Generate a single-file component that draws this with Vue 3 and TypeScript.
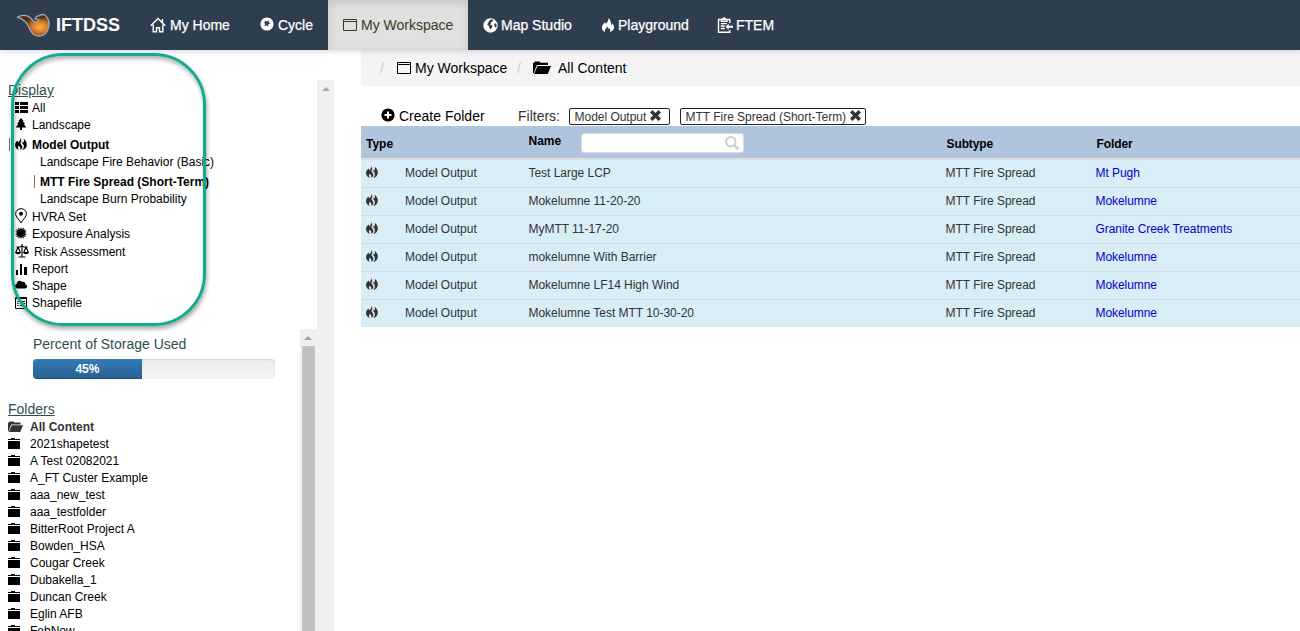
<script setup lang="ts">
interface NavItem { label: string; icon: string; width: number; active?: boolean }
interface DisplayItem { label: string; icon?: string; kind?: string }
interface ContentRow { name: string; folder: string }

const navItems: NavItem[] = [
  { label: 'My Home', icon: 'home', width: 109 },
  { label: 'Cycle', icon: 'cycle', width: 83 },
  { label: 'My Workspace', icon: 'window', width: 140, active: true },
  { label: 'Map Studio', icon: 'globe', width: 119 },
  { label: 'Playground', icon: 'fire', width: 116 },
  { label: 'FTEM', icon: 'clipboard', width: 87 },
]

const displayItems: DisplayItem[] = [
  { label: 'All', icon: 'list' },
  { label: 'Landscape', icon: 'tree' },
  { label: 'Model Output', icon: 'flames', kind: 'selected' },
  { label: 'Landscape Fire Behavior (Basic)', kind: 'child' },
  { label: 'MTT Fire Spread (Short-Term)', kind: 'child selected' },
  { label: 'Landscape Burn Probability', kind: 'child' },
  { label: 'HVRA Set', icon: 'pin', kind: 'spaced' },
  { label: 'Exposure Analysis', icon: 'burst' },
  { label: 'Risk Assessment', icon: 'scale', kind: 'spaced wide' },
  { label: 'Report', icon: 'chart' },
  { label: 'Shape', icon: 'cloud' },
  { label: 'Shapefile', icon: 'sheet' },
]

const folders: string[] = [
  '2021shapetest', 'A Test 02082021', 'A_FT Custer Example', 'aaa_new_test',
  'aaa_testfolder', 'BitterRoot Project A', 'Bowden_HSA', 'Cougar Creek',
  'Dubakella_1', 'Duncan Creek', 'Eglin AFB', 'FebNow',
]

const filters: string[] = ['Model Output', 'MTT Fire Spread (Short-Term)']

const rows: ContentRow[] = [
  { name: 'Test Large LCP', folder: 'Mt Pugh' },
  { name: 'Mokelumne 11-20-20', folder: 'Mokelumne' },
  { name: 'MyMTT 11-17-20', folder: 'Granite Creek Treatments' },
  { name: 'mokelumne With Barrier', folder: 'Mokelumne' },
  { name: 'Mokelumne LF14 High Wind', folder: 'Mokelumne' },
  { name: 'Mokelumne Test MTT 10-30-20', folder: 'Mokelumne' },
]

const storageUsed = 45
</script>

<template>
  <div class="page">
    <svg class="sprite" width="0" height="0">
      <symbol id="home" viewBox="0 0 16 16">
        <path d="M.7 8.800 8 1.500l7.300 7.300M3.200 7.500v7.200h3.300v-4h3v4h3.300V7.500M12.500 5.500V2" fill="none" stroke="currentColor" stroke-width="1.400" />
      </symbol>
      <symbol id="cycle" viewBox="0 0 16 16">
        <path fill-rule="evenodd" fill="currentColor" d="M8 .5a7.500 7.500 0 1 0 0 15A7.500 7.500 0 0 0 8 .5zM5 4l3 1 2.500-1.300-.6 2.300 2.300 1.400-2.600.6-.3 2.800-1.800-1.500-2.700 1.200 1.200-2.900L4 6.300l2-.3z" />
      </symbol>
      <symbol id="window" viewBox="0 0 14 14">
        <path d="M.5 1.500h13v11H.5zM.5 3.500h13" fill="none" stroke="currentColor" stroke-width="1" />
      </symbol>
      <symbol id="globe" viewBox="0 0 16 16">
        <path fill-rule="evenodd" fill="currentColor" d="M8 .3a7.700 7.700 0 1 0 0 15.400A7.700 7.700 0 0 0 8 .3zM9 1.300l2 .9-.8 1.300-1.700.9.1 1.400-1.600.8 1.800.6 1.500 1.200-.8 1.800-1.600 2-1.200-2.100-.7-2-1.500-1.300L5.500 5l1.200-2zM12 6.500l1.500-1 1 2-.2 2.600-1.800-.6z" />
      </symbol>
      <symbol id="fire" viewBox="0 0 16 16">
        <path fill-rule="evenodd" fill="currentColor" d="M8.300 0c.7 3.200-1 4.700-2.900 6.500L4.600 4.800C2.500 6.700 1 8.500 1 11c0 2.300 1.400 4 3.700 5-.9-2.700 1-4.200 3-6.200-.1 1.500.4 2.200 1.300 2.700l.7-1.100c1 1.500 1.100 3 .5 4.600 3-1 4.800-2.900 4.800-5.400 0-1.800-.8-3.300-2.300-4.700 0 1.100-.3 1.700-1 2.200C11.500 4.700 11 2 8.300 0z" />
      </symbol>
      <symbol id="clipboard" viewBox="0 0 16 16">
        <path d="M12.800 6V2.500H1.500v12.700h11.300V13M4.500 2.400h1.200C5.700.4 8.500.4 8.500 2.400H10v2H4.500zM3.800 6.600h6M3.800 9h4M3.800 11.500h4" fill="none" stroke="currentColor" stroke-width="1.400" />
        <path d="m8.500 9.700 3.200-3v2H16v2h-4.300v2z" fill="currentColor" />
      </symbol>
      <symbol id="list" viewBox="0 0 13 12">
        <path d="M0 1h4v3H0zM5 1h8v3H5zM0 5h4v3H0zM5 5h8v3H5zM0 9h4v3H0zM5 9h8v3H5z" fill="currentColor" />
      </symbol>
      <symbol id="tree" viewBox="0 0 12 12">
        <path d="m6 0 2.700 3H7.700l2.300 3H8.800L11.300 9.500H7V12H5V9.500H.7L3.200 6H2l2.300-3h-1z" fill="currentColor" />
      </symbol>
      <symbol id="flames" viewBox="0 0 12 12">
        <path d="M4.800 0c1.300 2.400-.4 3.200-1.600 4.300L2.600 2.600C.7 4.200-.1 5.800.1 7.700c.2 1.900 1.600 3.400 3.600 4-1-1.700-.8-3.100.3-4.300.1 1 .5 1.400 1.200 1.800.4 1 .2 1.700-.3 2.600C7.200 10.900 7.800 9.500 7.100 8 6.600 6.600 5.300 6 5.600 4.300 6.800 3 6.600 1.300 4.800 0z" fill="currentColor" />
        <path d="M8.600.8c3 2.200 3.600 5 3 7.400-.6 2-2.100 3.200-4.400 3.700 1.500-1.500 1.900-3 1.500-4.600C8.400 6 6.900 5.300 7 3.800l1.100 1c.9-1 1.100-2.400.5-4z" fill="currentColor" />
      </symbol>
      <symbol id="pin" viewBox="0 0 12 16">
        <path d="M6 .7C2.700.7.600 2.900.600 5.800c0 3.100 3 4.700 5.400 9.200 2.400-4.500 5.400-6.100 5.400-9.200C11.400 2.900 9.300.7 6 .7z" fill="none" stroke="currentColor" />
        <circle cx="6" cy="5.700" r="2" fill="currentColor" />
      </symbol>
      <symbol id="burst" viewBox="0 0 12 12">
        <path d="m6 0 .8 2.300L8.900.4l-.3 2.600 2.700-.8-1.600 2 2.300.6L9.600 6l2.400 1.400-2.400.5 1.600 2-2.700-.6.3 2.400-2-1.700L6 12l-.8-2-2 1.700.3-2.400-2.700.6 1.600-2L0 7.400 2.400 6 0 4.800l2.300-.6-1.600-2 2.700.8L3.100.4l2.100 1.900z" fill="currentColor" />
      </symbol>
      <symbol id="scale" viewBox="0 0 14 14">
        <path d="M7 0v12.500M3.500 13h7M1.500 3H5l2-1 2 1h3.500M3 3 .8 8.500M3 3l2.300 5.500M11 3 8.800 8.500M11 3l2.300 5.500" fill="none" stroke="currentColor" stroke-width="1.100" />
        <path d="M0 8h6c-.5 3-5.500 3-6 0zM8 8h6c-.5 3-5.500 3-6 0z" fill="currentColor" />
      </symbol>
      <symbol id="chart" viewBox="0 0 12 12">
        <path d="M1 7h2v5H1zM5 1h2v11H5zM9 4h3v8H9z" fill="currentColor" />
      </symbol>
      <symbol id="cloud" viewBox="0 0 12 12">
        <path d="M2.500 9.500C-.6 9.300-.7 5.700 1.700 5.100 1.700 1.700 5.500.8 7 3.100c2-.8 3.600.4 3.300 2.200 2.300.5 2.200 4.200-.3 4.200z" fill="currentColor" />
      </symbol>
      <symbol id="sheet" viewBox="0 0 12 12">
        <path d="M.5.5h11v11H.5zM.5 1.500h11M2.200 4.500h1.300M5 4.500h5M2.200 6.500h1.300M5 6.500h5M2.200 8.500h1.300M5 8.500h5" fill="none" stroke="currentColor" />
      </symbol>
      <symbol id="folder" viewBox="0 0 12 12">
        <path d="M0 1h3V0h4v1h5v1H0zM0 3h12v8H0z" fill="currentColor" />
      </symbol>
      <symbol id="folder-open" viewBox="0 0 18 14">
        <path d="M0 12V1.700h1L2 .5h4.500l1 1.200h7.500v2.300H3.800L.8 12zM4.500 5H18l-3.200 8H1z" fill="currentColor" />
      </symbol>
      <symbol id="plus" viewBox="0 0 14 14">
        <circle cx="7" cy="7" r="6.600" fill="currentColor" />
        <path d="M7 3.500v7M3.500 7h7" stroke="#fff" stroke-width="2" />
      </symbol>
      <symbol id="cross" viewBox="0 0 11 11">
        <path d="M2.500 0 5.500 3 8.500 0 11 2.500 8 5.500 11 8.500 8.500 11 5.500 8 2.500 11 0 8.500l3-3L0 2.500z" fill="currentColor" />
      </symbol>
      <symbol id="search" viewBox="0 0 14 14">
        <circle cx="5.800" cy="5.800" r="4.700" fill="none" stroke="currentColor" stroke-width="2" />
        <path d="m9.300 9.300 4 4" stroke="currentColor" stroke-width="2.500" />
      </symbol>
    </svg>

    <header class="topbar">
      <div class="brand">
        <svg class="logo" viewBox="0 0 34 24">
          <defs>
            <radialGradient id="ember" cx="0.72" cy="0.58" r="0.5">
              <stop offset="0" stop-color="#ffae50" />
              <stop offset="0.5" stop-color="#d67a24" />
              <stop offset="1" stop-color="#4f3215" />
            </radialGradient>
          </defs>
          <path d="M1.300 4.200C5 1.800 10.500 1.800 14 4.600c2.200 1.800 3 4.100 5 4.400 1.800.2 3-.6 3.100-1.800 0-1.100-1.600-1.300-2.900-.9.3-2.200 1.800-3.600 4-3.500 1.200-1.700 4.800-1.900 6.700.3 2.600 2.700 3.600 6.500 2.900 10.400-1.100 6-5 9.500-10.100 9.500-4.500-.1-7.500-3-9.300-7.500C11.600 10.200 9 6.500 1.300 4.200z" fill="url(#ember)" stroke="#a5abb3" stroke-width="1.300" stroke-linejoin="round" />
          <path d="M21 4.900c1.700-1 3.100.3 4.300-.3 1.200-.7 2.500-.3 3.200.5" fill="none" stroke="#3c3126" stroke-width="1.300" />
        </svg>
        <span>IFTDSS</span>
      </div>
      <nav>
        <a v-for="item in navItems" :key="item.label" :class="['nav-item', item.icon, { active: item.active }]" :style="{ width: item.width + 'px' }">
          <svg><use :href="'#' + item.icon" /></svg><span>{{ item.label }}</span>
        </a>
      </nav>
    </header>

    <div class="body">
      <aside class="sidebar">
        <div class="outer">
          <section class="display">
            <h4>Display</h4>
            <div v-for="item in displayItems" :key="item.label" :class="['entry', item.kind]">
              <svg v-if="item.icon" :class="item.icon"><use :href="'#' + item.icon" /></svg>
              <span>{{ item.label }}</span>
            </div>
          </section>
          <section class="lower">
            <div class="lower-content">
              <p class="storage-label">Percent of Storage Used</p>
              <div class="progress"><div class="bar" :style="{ width: storageUsed + '%' }">{{ storageUsed }}%</div></div>
              <h4>Folders</h4>
              <div class="folder current"><svg><use href="#folder-open" /></svg><span>All Content</span></div>
              <div v-for="name in folders" :key="name" class="folder"><svg><use href="#folder" /></svg><span>{{ name }}</span></div>
            </div>
            <div class="track inner"><i></i><b></b></div>
          </section>
        </div>
        <div class="track"><i></i></div>
      </aside>

      <main>
        <div class="breadcrumb">
          <span class="slash">/</span>
          <svg class="bc-window"><use href="#window" /></svg><span class="bc-work">My Workspace</span>
          <span class="slash">/</span>
          <svg class="bc-folder"><use href="#folder-open" /></svg><span>All Content</span>
        </div>
        <div class="toolbar">
          <svg class="plus"><use href="#plus" /></svg><span class="create">Create Folder</span>
          <span class="filters">Filters:</span>
          <span v-for="f in filters" :key="f" class="chip"><span>{{ f }}</span><svg><use href="#cross" /></svg></span>
        </div>
        <div class="table">
          <div class="row head">
            <span class="type">Type</span>
            <span></span>
            <span class="name">Name<label class="search"><svg><use href="#search" /></svg></label></span>
            <span class="title">Subtype</span>
            <span class="title">Folder</span>
          </div>
          <div v-for="row in rows" :key="row.name" class="row">
            <span class="type"><svg><use href="#flames" /></svg></span>
            <span>Model Output</span>
            <span>{{ row.name }}</span>
            <span>MTT Fire Spread</span>
            <a>{{ row.folder }}</a>
          </div>
        </div>
      </main>
    </div>
    <div class="highlight"></div>
  </div>
</template>

<style>
body { overflow: hidden; }
</style>

<style scoped>
* { box-sizing: border-box; }
.page { position: relative; width: 1300px; height: 631px; overflow: hidden; background: #fff; color: #000; font: 12px/17px "Liberation Sans", Arial, sans-serif; display: flex; flex-direction: column; }
.sprite { position: absolute; }
svg { flex: none; display: block; }
.topbar { height: 50px; flex: none; display: flex; background: #2f3e4e; color: #fff; box-shadow: 0 1px 6px rgba(0, 0, 0, .17); z-index: 1; }
.brand { width: 136px; padding-left: 16px; display: flex; align-items: center; font-size: 18px; font-weight: 700; }
.logo { width: 34px; height: 24px; margin-right: 6px; }
.brand span { padding-top: 1px; }
nav { display: flex; }
.nav-item { display: flex; align-items: center; padding: 0 0 0 15px; font-size: 14px; line-height: 20px; white-space: nowrap; }
.nav-item svg { width: 15px; height: 15px; margin-right: 4px; }
.nav-item.home svg { width: 16px; height: 16px; margin: 0 4px 0 -1px; }
.nav-item.cycle svg { width: 14px; height: 14px; margin-top: -2px; }
.nav-item.window svg { width: 14px; height: 14px; }
.nav-item.globe svg { margin-right: 3px; }
.nav-item.fire svg { width: 14px; height: 16px; margin: 0 2px 0 -1px; }
.nav-item.fire span { margin-left: 1px; }
.nav-item.clipboard svg { width: 16px; height: 16px; margin: 0 3px 0 -1px; }
.nav-item:not(.active) { -webkit-text-stroke: .25px #fff; }
.nav-item.active { background: #e0e0e0; color: #333d20; box-shadow: inset 0 3px 9px rgba(0, 0, 0, .12); }
.body { flex: 1; min-height: 0; display: flex; }
.sidebar { width: 334px; flex: none; margin-top: 30px; display: flex; overflow: hidden; }
.outer { width: 317px; display: flex; flex-direction: column; min-height: 0; }
.display { height: 249px; flex: none; padding-left: 8px; }
h4 { margin: 0; font-size: 14px; line-height: 20px; font-weight: 400; text-decoration: underline; color: #2f4f4f; height: 19px; }
.entry { height: 17px; display: flex; align-items: center; padding-left: 7px; white-space: nowrap; }
.entry span, .folder span { padding-top: 1px; height: 17px; }
.entry svg { width: 12px; height: 12px; margin: -1px 5px 0 0; }
.entry svg.list { width: 13px; margin-right: 4px; }
.entry svg.pin { height: 16px; }
.entry svg.chart, .entry svg.sheet { margin-top: 1px; }
.entry svg.scale { width: 14px; height: 14px; margin-right: 5px; }
.entry.child { padding-left: 32px; }
.entry.spaced { margin-top: 1px; }
.entry.selected { margin-top: 3px; font-weight: 700; padding-left: 1px; }
.entry.selected::before { content: ""; width: 1px; height: 13px; background: #777; margin-right: 5px; }
.entry.child.selected { padding-left: 26px; }
.lower { flex: 1; min-height: 0; display: flex; overflow: hidden; }
.lower-content { width: 300px; padding: 5px 0 0 8px; }
.storage-label { margin: 0 0 5px 25px; font-size: 14px; line-height: 20px; color: #2f4f4f; }
.progress { width: 242px; height: 20px; margin: 0 0 20px 25px; background: linear-gradient(#ebebeb, #f5f5f5); border-radius: 4px; overflow: hidden; box-shadow: inset 0 1px 2px rgba(0, 0, 0, .1); }
.bar { height: 20px; line-height: 20px; text-align: center; color: #fff; font-weight: 700; background: linear-gradient(#337ab7, #286090); box-shadow: inset 0 -1px 0 rgba(0, 0, 0, .15); }
.folder { height: 17px; display: flex; align-items: center; white-space: nowrap; }
.folder svg { width: 12px; height: 12px; margin: 1px 10px 0 0; }
.folder.current { font-weight: 700; color: #333; }
.folder.current svg { width: 15px; margin: 1px 7px 0 0; }
.track { width: 17px; background: #f0f0f0; display: flex; flex-direction: column; align-items: center; }
.track i { margin-top: 7px; border: 4px solid transparent; border-top: 0; border-bottom: 4px solid #a3a3a3; }
.track.inner { padding-right: 1px; }
.track b { width: 13px; flex: 1; margin-top: 6px; background: #c1c1c1; }
main { margin-left: 27px; width: 939px; }
.breadcrumb { height: 36px; background: #f4f4f4; border-radius: 4px 0 0 4px; display: flex; align-items: center; padding-left: 19px; font-size: 14px; }
.slash { width: 17px; color: #ccc; }
.bc-window { width: 14px; height: 14px; margin-right: 4px; }
.bc-work { width: 102px; }
.breadcrumb .slash + .bc-folder { width: 18px; height: 14px; margin: 0 7px 0 -1px; }
.toolbar { height: 40px; padding: 20px 0 0 20px; display: flex; align-items: center; font-size: 14px; }
.plus { width: 14px; height: 14px; margin: -2px 4px 0 0; }
.create { width: 119px; }
.filters { width: 51px; color: #333; }
.chip { width: 186px; height: 17px; border: 1px solid #222; border-radius: 2px; padding: 0 4px; margin-right: 10px; display: flex; align-items: center; font-size: 12px; color: #333; white-space: nowrap; }
.chip span { padding: 1px 0 0 .5px; height: 17px; letter-spacing: -.02px; }
.chip svg { width: 11px; height: 11px; margin: -1px 0 0 4px; }
.filters + .chip { width: 101px; }
.row { height: 28px; display: grid; grid-template-columns: 44px 123.500px 417px 150px 1fr; align-items: center; background: #d9edf7; border-bottom: 1px solid #d8dcdf; color: #333; letter-spacing: -.03px; }
.row:last-child { height: 27px; border-bottom: 0; }
.row.head { height: 34px; padding-top: 2px; background: #b0c4de; border-bottom: 2px solid #ddd; color: #000; font-weight: 700; letter-spacing: 0; }
.head .title, .head > .type { padding-top: 2px; }
.head .title { letter-spacing: -.1px; padding-left: 1px; }
.type { padding-left: 5px; }
.type svg { width: 12px; height: 12px; margin-top: -3px; }
.row a { color: #0000cd; letter-spacing: -.06px; }
.name { display: flex; margin-top: -4px; align-items: center; }
.search { width: 163px; height: 20px; margin: 4px 0 0 20px; background: #fff; border: 1px solid #ddd; border-radius: 3px; padding: 2px 4px; display: flex; justify-content: flex-end; color: #ccc; }
.search svg { width: 14px; height: 14px; }
.highlight { position: absolute; left: 11px; top: 53px; width: 195px; height: 273px; border: 3px solid #10ab90; border-radius: 52px; z-index: 2; box-shadow: 1px 3px 4px rgba(0, 0, 0, .35), inset 1px 3px 4px rgba(0, 0, 0, .3); }
</style>
